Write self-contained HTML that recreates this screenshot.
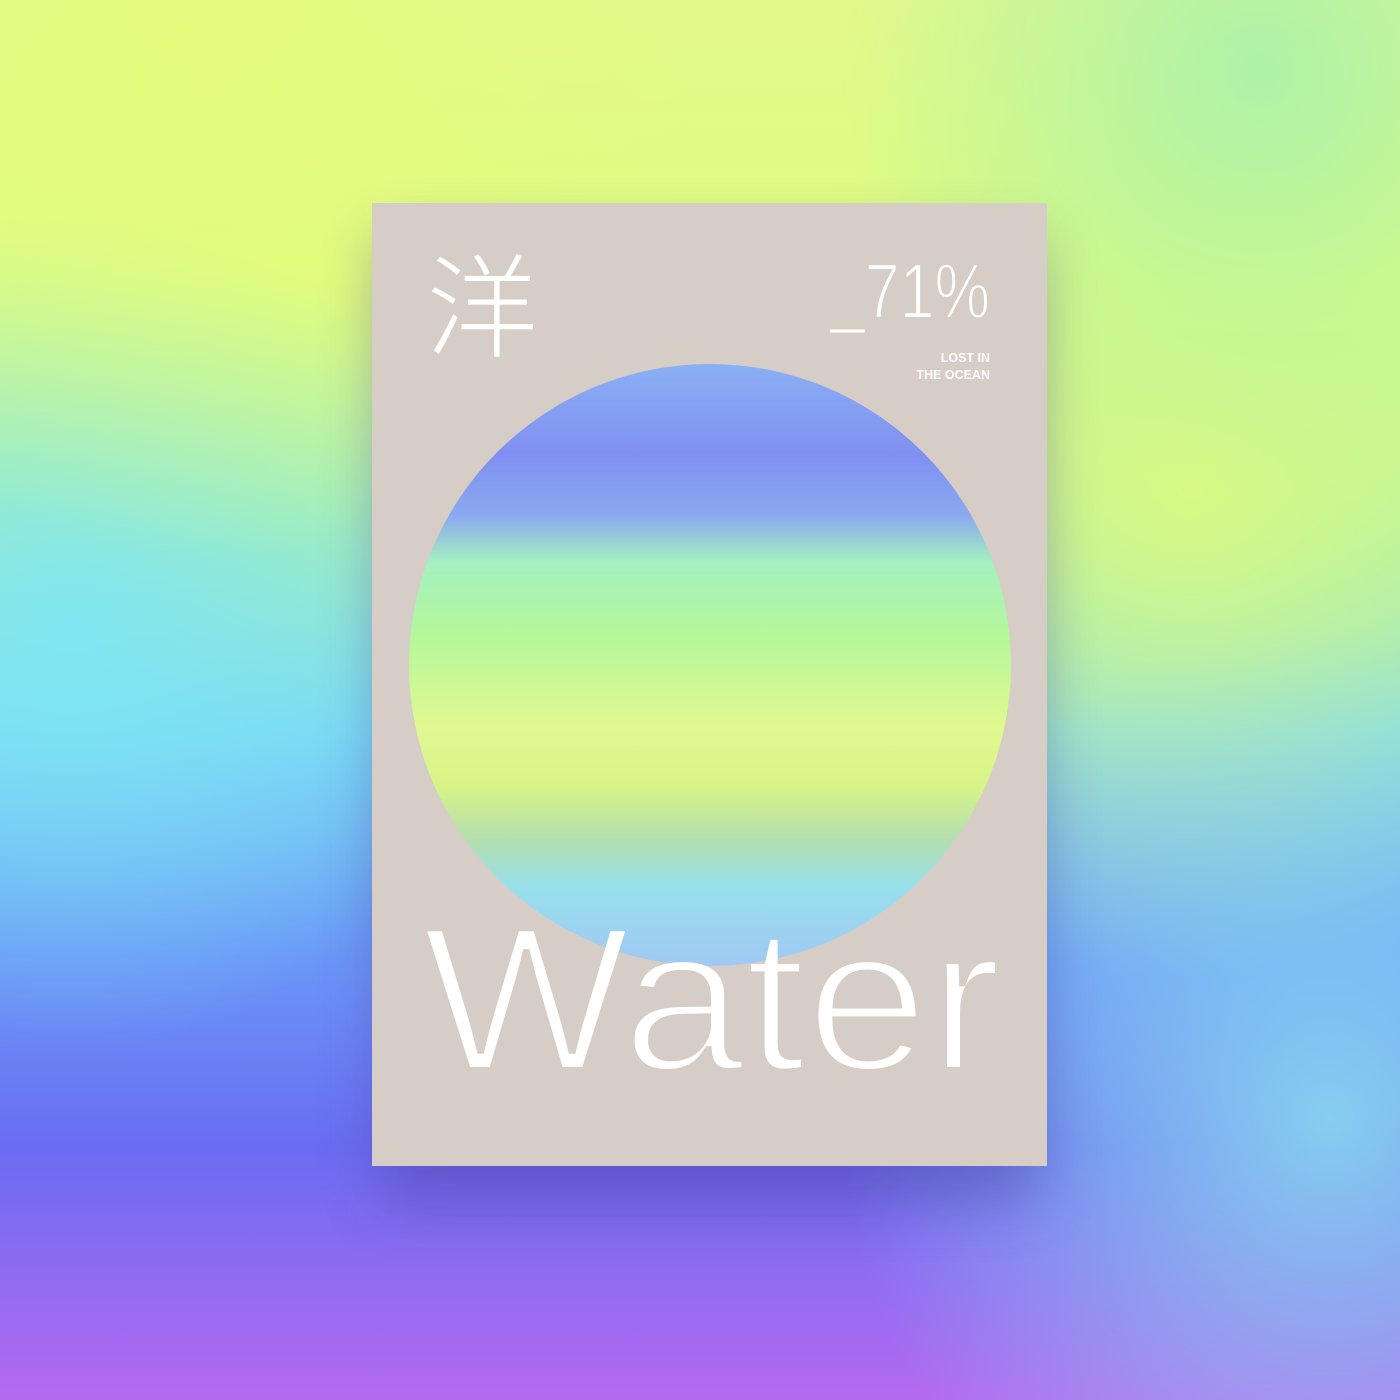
<!DOCTYPE html>
<html><head><meta charset="utf-8"><style>
html,body{margin:0;padding:0;width:1400px;height:1400px;overflow:hidden}
</style></head><body>
<svg width="1400" height="1400" viewBox="0 0 1400 1400" xmlns="http://www.w3.org/2000/svg">
<defs>
<linearGradient id="bg" x1="0" y1="0" x2="0" y2="1">
<stop offset="0" stop-color="#e4f98a"/>
<stop offset="0.2" stop-color="#dcfd80"/>
<stop offset="0.38" stop-color="#a8f0b0"/>
<stop offset="0.52" stop-color="#7ad8f4"/>
<stop offset="0.68" stop-color="#6a98f8"/>
<stop offset="0.82" stop-color="#6a6cf2"/>
<stop offset="1" stop-color="#b46af0"/>
</linearGradient>
<radialGradient id="g1" cx="0.85" cy="0.35" r="0.35"><stop offset="0" stop-color="#dcfa80" stop-opacity="0.9"/><stop offset="1" stop-color="#dcfa80" stop-opacity="0"/></radialGradient>
<radialGradient id="g2" cx="0.05" cy="0.45" r="0.3"><stop offset="0" stop-color="#7ee6f4" stop-opacity="0.9"/><stop offset="1" stop-color="#7ee6f4" stop-opacity="0"/></radialGradient>
<radialGradient id="g3" cx="0.95" cy="0.8" r="0.35"><stop offset="0" stop-color="#8ad8f0" stop-opacity="0.9"/><stop offset="1" stop-color="#8ad8f0" stop-opacity="0"/></radialGradient>
<radialGradient id="g4" cx="0.15" cy="0.05" r="0.35"><stop offset="0" stop-color="#e6fb7c" stop-opacity="0.9"/><stop offset="1" stop-color="#e6fb7c" stop-opacity="0"/></radialGradient>
<radialGradient id="g5" cx="0.9" cy="0.05" r="0.3"><stop offset="0" stop-color="#a0f0b0" stop-opacity="0.8"/><stop offset="1" stop-color="#a0f0b0" stop-opacity="0"/></radialGradient>
<linearGradient id="cg" x1="0" y1="0" x2="0" y2="1">
<stop offset="0" stop-color="#8ab0f4"/>
<stop offset="0.15" stop-color="#8090f2"/>
<stop offset="0.25" stop-color="#8aa8f0"/>
<stop offset="0.33" stop-color="#a4f0c0"/>
<stop offset="0.45" stop-color="#b4f89a"/>
<stop offset="0.6" stop-color="#e0f890"/>
<stop offset="0.7" stop-color="#d8f488"/>
<stop offset="0.78" stop-color="#b8e0a8"/>
<stop offset="0.87" stop-color="#98e0ec"/>
<stop offset="1" stop-color="#a0c8f4"/>
</linearGradient>
<filter id="sh" x="-20%" y="-20%" width="140%" height="150%"><feGaussianBlur stdDeviation="30"/></filter>
<mask id="wm" maskUnits="userSpaceOnUse" x="0" y="0" width="1400" height="1400">
<rect width="1400" height="1400" fill="#000"/>
<text x="422" y="1070" font-family="Liberation Sans, sans-serif" font-size="206" fill="#fff" stroke="#000" stroke-width="6" textLength="580" lengthAdjust="spacingAndGlyphs">Water</text>
<text x="990" y="318" text-anchor="end" font-family="Liberation Sans, sans-serif" font-size="78" fill="#fff" stroke="#000" stroke-width="2" textLength="160" lengthAdjust="spacingAndGlyphs">_71%</text>
</mask>
</defs>
<rect width="1400" height="1400" fill="url(#bg)"/>
<rect width="1400" height="1400" fill="url(#g1)"/>
<rect width="1400" height="1400" fill="url(#g2)"/>
<rect width="1400" height="1400" fill="url(#g3)"/>
<rect width="1400" height="1400" fill="url(#g4)"/>
<rect width="1400" height="1400" fill="url(#g5)"/>
<rect x="380" y="240" width="660" height="960" fill="#4a3a9a" opacity="0.45" filter="url(#sh)"/>
<rect x="372" y="203" width="675" height="963" fill="#d6cdc6"/>
<circle cx="710" cy="665" r="301" fill="url(#cg)"/>
<text x="426" y="348" font-family="Noto Sans CJK SC, sans-serif" font-size="112" font-weight="300" fill="#fff">洋</text>
<text x="990" y="362" text-anchor="end" font-family="Liberation Sans, sans-serif" font-size="12.5" font-weight="bold" fill="#fff">LOST IN</text>
<text x="990" y="379" text-anchor="end" font-family="Liberation Sans, sans-serif" font-size="12.5" font-weight="bold" fill="#fff">THE OCEAN</text>
<rect width="1400" height="1400" fill="#fff" mask="url(#wm)"/>
</svg>
</body></html>
